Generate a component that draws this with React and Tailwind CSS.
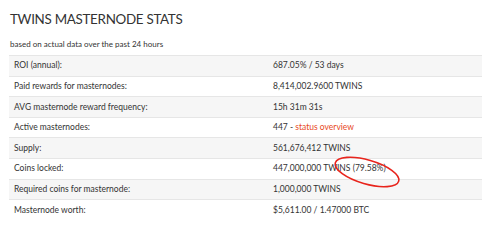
import React from "react";

const rows = [
  ["ROI (annual):", "687.05% / 53 days"],
  ["Paid rewards for masternodes:", "8,414,002.9600 TWINS"],
  ["AVG masternode reward frequency:", "15h 31m 31s"],
  ["Active masternodes:", "status"],
  ["Supply:", "561,676,412 TWINS"],
  ["Coins locked:", "447,000,000 TWINS (79.58%)"],
  ["Required coins for masternode:", "1,000,000 TWINS"],
  ["Masternode worth:", "$5,611.00 / 1.47000 BTC"],
];

export default function App() {
  return (
    <main
      className="relative w-[500px] h-[245px] bg-white text-[#333] overflow-hidden"
      style={{ fontFamily: 'Lato, "Open Sans", "Liberation Sans", sans-serif' }}
    >
      <h1 className="pl-[10px] pt-[9px] text-[13.4px] leading-[20px] font-normal tracking-[-0.3px]">
        TWINS MASTERNODE STATS
      </h1>
      <p className="pl-[10px] mt-[9px] text-[8px] leading-[12px]">
        based on actual data over the past 24 hours
      </p>

      <div className="ml-[9px] mt-[5px] w-[473px] text-[8.5px]">
        {rows.map(([label, value], i) => (
          <div
            key={label}
            className={
              "flex h-[20.6px] items-center border-t border-[#e6e6e6] " +
              (i % 2 === 0 ? "bg-[#f6f6f6]" : "bg-white")
            }
          >
            <div className="w-[264px] pl-[5px]">{label}</div>
            <div className="flex-1">
              {value === "status" ? (
                <span>
                  447 - <span className="text-[#e8491d]">status overview</span>
                </span>
              ) : (
                value
              )}
            </div>
          </div>
        ))}
      </div>

      {/* red ellipse highlight */}
      <svg
        className="absolute left-[330px] top-[155px]"
        width="74"
        height="36"
        viewBox="0 0 74 36"
      >
        <ellipse
          cx="37"
          cy="17"
          rx="33"
          ry="12"
          transform="rotate(16 37 17)"
          fill="none"
          stroke="#e8241c"
          strokeWidth="1.6"
        />
      </svg>
    </main>
  );
}
